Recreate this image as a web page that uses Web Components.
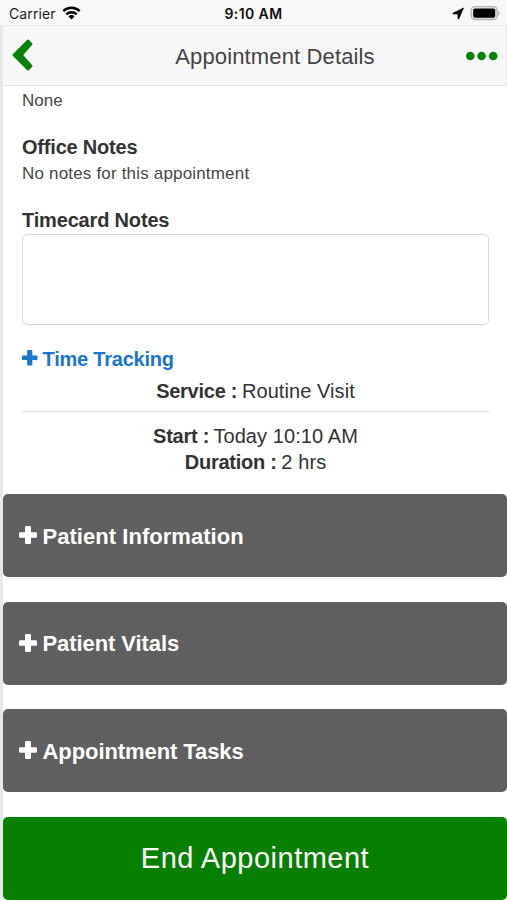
<!DOCTYPE html>
<html lang="en"><head><meta charset="utf-8"><title>Appointment Details</title>
<style>html,body{margin:0;background:#fff}body{font-family:"Liberation Sans",Arial,sans-serif;color:#333;width:507px;height:900px;overflow:hidden}</style></head>
<body><appointment-screen></appointment-screen>
<script>
const define = (name, html) => customElements.define(name, class extends HTMLElement {
  constructor() {
    super();
    const t = document.createElement('template');
    t.innerHTML = html;
    this.attachShadow({mode: 'open'}).append(t.content.cloneNode(true));
  }
});

define('plus-icon', `<style>:host{display:block;flex:none;width:15.500px;height:15.500px}svg{display:block;width:100%;height:100%}</style>
<svg viewBox="0 0 18 18"><path fill="currentColor" d="M7.2 0h3.6q1.2 0 1.2 1.2V6.300h4.800q1.200 0 1.200 1.200v3q0 1.200-1.200 1.200H12v5.100q0 1.200-1.200 1.200H7.200Q6 18 6 16.800V11.700H1.200Q0 11.700 0 10.500v-3Q0 6.300 1.200 6.300H6V1.200Q6 0 7.200 0z"/></svg>`);

define('status-bar', `<style>:host{display:grid;grid-template-columns:1fr auto 1fr;height:26px;box-sizing:border-box;background:#f8f8f8;font:14px/28px Inter,sans-serif;color:#222;border-bottom:1px solid #eee}
.l{display:flex;padding-left:9px;gap:6px;letter-spacing:.1px}.l svg{margin-top:6px}.t{font-weight:600;font-size:14px;letter-spacing:.4px;color:#111}.r{display:flex;justify-content:flex-end;padding-right:6px;gap:6px}.r svg{margin-top:6px}</style>
<div class="l"><span>Carrier</span><svg width="19" height="14" viewBox="0 0 19 14"><g fill="none" stroke="#000" stroke-width="2.400"><path d="M1.300 5.100a11.800 11.800 0 0 1 16.400 0"/><path d="M4.300 8.400a7.500 7.500 0 0 1 10.400 0"/></g><path d="M6.400 10.400a4.400 4.400 0 0 1 6.200 0L9.500 13.500z"/></svg></div>
<div class="t">9:10 AM</div>
<div class="r"><svg width="12" height="14" viewBox="0 0 12 14"><path d="M11.500 2L.9 7.200q-.4.600.4.700L5.900 8l.2 4.700q.3.700.7.100z" stroke="#000" stroke-width=".7" stroke-linejoin="round"/></svg>
<svg width="31" height="15" viewBox="0 0 31 15"><rect x="1.200" y=".7" width="26" height="12.800" rx="3.800" fill="#e9e9e9" stroke="#b2b2b2" stroke-width="1.300"/><rect x="3.200" y="2.500" width="22" height="9.200" rx="1.800"/><path d="M28.500 4.500q2.500 2.600 0 5.200z" fill="#aaa"/></svg></div>`);

define('nav-bar', `<style>:host{display:grid;grid-template-columns:84px 1fr 43px;align-items:center;height:60px;box-sizing:border-box;margin-left:3px;background:#f7f7f7;border-right:1px solid #e8e8e8;border-bottom:1px solid #e8e8e8}
h1{margin:0;padding:2px 0 0 0;text-align:center;font-size:22px;line-height:26px;font-weight:400;letter-spacing:.14px;white-space:nowrap;color:#444}svg{display:block}.b{padding-left:9px;margin-top:-1px}.m{justify-self:end;padding-right:8px}</style>
<svg class="b" width="21" height="32" viewBox="0 0 21 32"><path fill="#078207" d="M15 1q1-1 2 0l3 3q1 1 0 2L11.200 16l8.800 10q1 1 0 2l-3 3q-1 1-2 0L1 17q-1-1 0-2z"/></svg>
<h1><slot></slot></h1>
<svg class="m" width="33" height="10" viewBox="0 0 33 10"><g fill="#078207"><circle cx="5.300" cy="5" r="4.300"/><circle cx="16.600" cy="5" r="4.300"/><circle cx="28.200" cy="5" r="4.300"/></g></svg>`);

define('note-block', `<style>:host{display:block}.h{font-weight:700;font-size:20px;line-height:26px;letter-spacing:-.2px}.b{font-size:17px;line-height:24px;letter-spacing:.18px;margin-top:2px;color:#484848}</style>
<div class="h"><slot name="title"></slot></div><div class="b"><slot></slot></div>`);

define('note-input', `<style>:host{display:block}textarea{display:block;box-sizing:border-box;width:100%;height:91px;border:1.500px solid #d8d8d8;border-radius:5px;resize:none;background:#fff;outline:0;padding:8px}</style><textarea aria-label="Timecard Notes"></textarea>`);

define('time-toggle', `<style>:host{display:flex;align-items:center;gap:5px;color:#1a75cc;font-size:20px;line-height:26px;font-weight:700;letter-spacing:-.22px}plus-icon{margin-top:-2px}</style><plus-icon></plus-icon><span><slot></slot></span>`);

define('detail-line', `<style>:host{display:block;text-align:center;font-size:20px;line-height:26px;letter-spacing:.08px}b{font-weight:700;letter-spacing:-.25px;margin-right:-1px}</style><b><slot name="label"></slot></b> <slot></slot>`);

define('section-card', `<style>:host{display:flex;align-items:center;gap:5.500px;height:83px;box-sizing:border-box;padding:2px 16px 0;background:#5f5f5f;border-radius:5px;color:#fff;font-size:22px;font-weight:700;letter-spacing:.04px}plus-icon{width:18px;height:18px;margin-top:-3px}:host([tight]){letter-spacing:-.08px}</style><plus-icon></plus-icon><span><slot></slot></span>`);

define('end-button', `<style>:host{display:block}button{display:block;width:100%;height:83px;border:0;border-radius:5px;background:#078000;color:#fff;font:29px "Liberation Sans",Arial,sans-serif;letter-spacing:.5px;padding:0}</style><button><slot></slot></button>`);

define('appointment-screen', `<style>:host{display:block;height:900px;background:linear-gradient(90deg,#e8e8e8 3px,#fff 3px)}
.d{padding:3px 18px 0 22px}.none{font-size:17px;line-height:24px;color:#484848}note-block{margin-top:21px}
.tc{font-weight:700;font-size:20px;line-height:26px;letter-spacing:-.17px;margin-top:21px}note-input{margin-top:1px}time-toggle{margin-top:21px}.svc{margin-top:6px}hr{border:0;height:1px;background:#ddd;margin:7px 0 11px}
.cards{display:flex;flex-direction:column;gap:24.600px;margin:19.200px 0 0 3px}</style>
<status-bar></status-bar><nav-bar>Appointment Details</nav-bar>
<div class="d"><div class="none">None</div>
<note-block><span slot="title">Office Notes</span>No notes for this appointment</note-block>
<div class="tc">Timecard Notes</div><note-input></note-input>
<time-toggle>Time Tracking</time-toggle>
<detail-line class="svc"><span slot="label">Service :</span>Routine Visit</detail-line><hr>
<detail-line><span slot="label">Start :</span>Today 10:10 AM</detail-line>
<detail-line><span slot="label">Duration :</span>2 hrs</detail-line></div>
<div class="cards"><section-card>Patient Information</section-card><section-card tight>Patient Vitals</section-card><section-card tight>Appointment Tasks</section-card><end-button>End Appointment</end-button></div>`);
</script></body></html>
